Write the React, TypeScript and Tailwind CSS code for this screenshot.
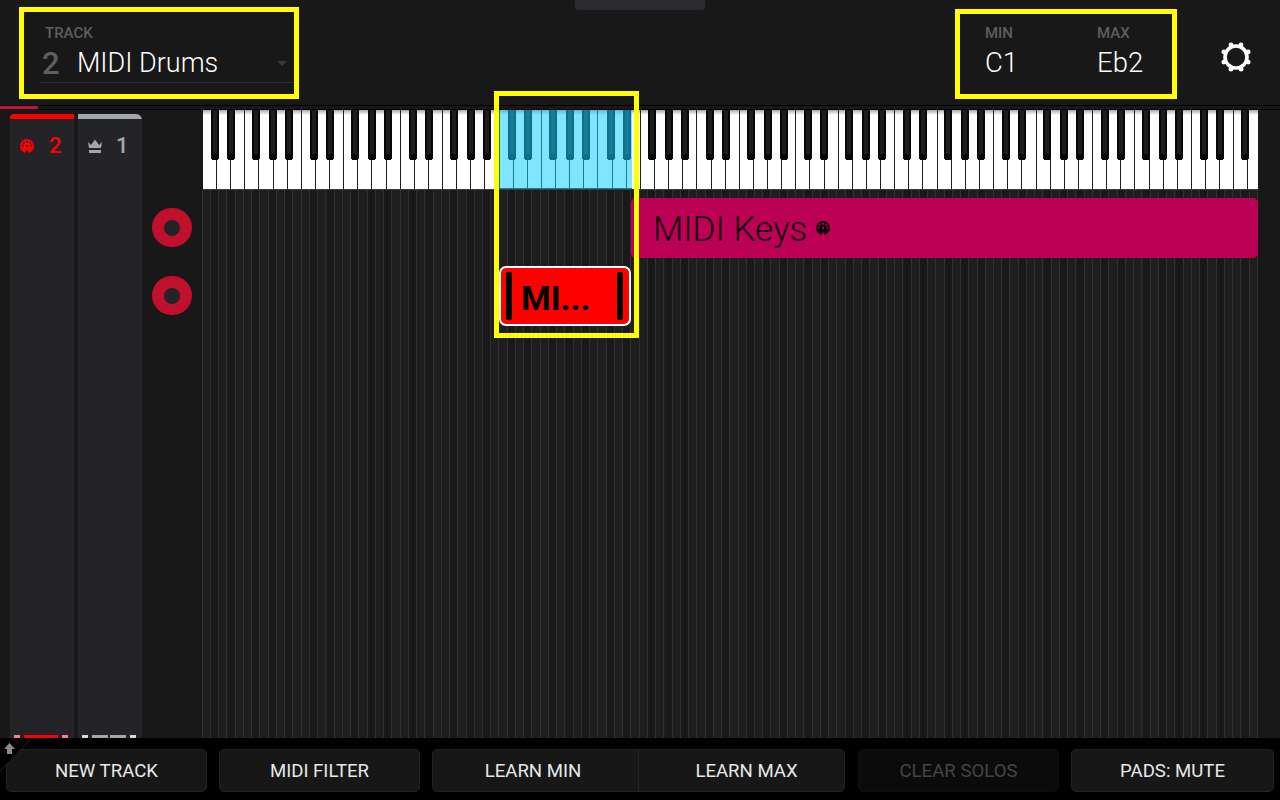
const SEMI = 1055 / 128;
const WHITE = (SEMI * 12) / 7;
const inBlue = (x: number) => x >= 496 && x < 632;

function Din({ color, hole, className }: { color: string; hole: string; className: string }) {
  return (
    <svg viewBox="0 0 14 14" className={className}>
      <circle cx="7" cy="7" r="7" fill={color} />
      {[[2.6, 6.6], [3.7, 3.7], [7, 2.5], [10.3, 3.7], [11.4, 6.6]].map(([x, y]) => (
        <rect key={x} x={x - 0.9} y={y - 0.9} width="1.8" height="1.8" fill={hole} />
      ))}
      <rect x="6.1" y="6" width="1.8" height="1.8" fill={hole} />
      <rect x="5.8" y="11.6" width="2.4" height="2.4" fill={hole} />
    </svg>
  );
}

function Crown() {
  return (
    <svg viewBox="0 0 14 14" className="w-[14px] h-[14px]">
      <path d="M0 3 L3 6 L7 0.5 L11 6 L14 3 L13 9 L1 9 Z" fill="#a2a8aa" />
      <rect x="1" y="11" width="12" height="3" fill="#a2a8aa" />
    </svg>
  );
}

function Gear() {
  const teeth = Array.from({ length: 8 }, (_, i) => ((i + 0.5) * Math.PI) / 4);
  return (
    <svg viewBox="0 0 32 32" className="w-8 h-8">
      <circle cx="16" cy="16" r="11" fill="none" stroke="#fff" strokeWidth="3.6" />
      {teeth.map((a) => (
        <circle key={a} cx={16 + 13.2 * Math.cos(a)} cy={16 + 13.2 * Math.sin(a)} r="2.4" fill="#fff" />
      ))}
    </svg>
  );
}

function Keyboard() {
  const lines = Array.from({ length: 74 }, (_, n) => 216 + WHITE * n);
  const blacks: number[] = [];
  for (let k = 0; k < 11; k++) {
    for (const o of [211, 227, 252, 269, 285]) {
      const x = o + SEMI * 12 * k;
      if (x + 8 <= 1258) blacks.push(Math.round(x));
    }
  }
  return (
    <svg width="1055" height="80" viewBox="203 110 1055 80" className="block" shapeRendering="crispEdges">
      <defs>
        <linearGradient id="topw" x1="0" y1="0" x2="0" y2="1">
          <stop offset="0" stopColor="#a9a9a9" />
          <stop offset="1" stopColor="#ffffff" />
        </linearGradient>
        <linearGradient id="topb" x1="0" y1="0" x2="0" y2="1">
          <stop offset="0" stopColor="#68b8cc" />
          <stop offset="1" stopColor="#80e5ff" />
        </linearGradient>
      </defs>
      <rect x="203" y="110" width="1055" height="80" fill="#fff" />
      <rect x="203" y="110" width="1055" height="5" fill="url(#topw)" />
      <rect x="496" y="110" width="136" height="80" fill="#80e5ff" />
      <rect x="496" y="110" width="136" height="5" fill="url(#topb)" />
      {lines.map((x) => (
        <rect key={x} x={Math.round(x)} y="110" width="1" height="80" fill={inBlue(x) ? "#127d98" : "#1e1e1e"} />
      ))}
      <rect x="496" y="188" width="136" height="1" fill="#127d98" />
      <rect x="203" y="189" width="1055" height="1" fill="#3c3c3c" />
      {blacks.map((x) => {
        const b = inBlue(x);
        return (
          <g key={x}>
            <rect x={x} y="110" width="8" height="49" fill={b ? "#0d6f88" : "#070707"} />
            <rect x={x + 1} y="159" width="6" height="1" fill={b ? "#0d6f88" : "#070707"} />
            <rect x={x + 2} y="110" width="4" height="44" fill={b ? "#147d97" : "#1d1d1d"} />
          </g>
        );
      })}
    </svg>
  );
}

function GridBack() {
  const blackPc = [1, 3, 6, 8, 10];
  return (
    <svg width="1056" height="548" viewBox="202 190 1056 548" className="absolute left-0 top-0" shapeRendering="crispEdges">
      <rect x="202" y="190" width="1056" height="548" fill="#1e1e1e" />
      {Array.from({ length: 128 }, (_, n) => {
        const x = Math.round(203 + SEMI * n);
        return blackPc.includes(n % 12) ? (
          <rect key={n} x={x} y="190" width="8" height="548" fill="#191919" />
        ) : null;
      })}
      {Array.from({ length: 128 }, (_, n) => (
        <rect key={n} x={Math.round(210 + SEMI * n)} y="190" width="1" height="548" fill="#303030" />
      ))}
      <rect x="202" y="190" width="1" height="548" fill="#343434" />
    </svg>
  );
}

function Ring() {
  return (
    <div className="w-10 h-[39px] rounded-full bg-[#c0102e] flex items-center justify-center">
      <div className="w-4 h-4 rounded-full bg-[#232328]" />
    </div>
  );
}

function TrackCol({ bar, rounded, children, foot }: { bar: string; rounded: string; children: React.ReactNode; foot: React.ReactNode }) {
  return (
    <div className={`w-16 h-full bg-[#232328] flex flex-col overflow-hidden ${rounded}`}>
      <div className={`h-[5px] ${bar}`} />
      <div className="h-[13px]" />
      <div className="flex items-center h-[28px]">{children}</div>
      <div className="flex-1" />
      {foot}
    </div>
  );
}

function Btn({ children, className }: { children: React.ReactNode; className: string }) {
  return (
    <div className={`h-[43px] flex items-center justify-center pt-[2px] rounded-[5px] text-[18.6px] border ${className}`}>{children}</div>
  );
}

export default function App() {
  return (
    <div className="relative w-[1280px] h-[800px] overflow-hidden bg-[#181818] flex flex-col font-['Roboto',sans-serif] text-white">
      {/* header */}
      <header className="relative h-[105px] flex">
        <div className="absolute left-[575px] top-0 w-[130px] h-[10px] bg-[#2b2b2f] rounded-b-[4px]" />
        <div className="w-[260px] ml-10 flex flex-col">
          <div className="pl-[5px] pt-[24px] h-[44px] text-[15px] leading-[18px] font-medium text-[#5e5e5e]">TRACK</div>
          <div className="h-[39px] flex items-center border-b border-[#2e2e2e]">
            <span className="text-[31px] w-[37px] pl-[2px] font-medium text-[#5e5e5e] leading-none">2</span>
            <span className="flex-1 text-[27px] font-light leading-none">MIDI Drums</span>
            <span className="mr-[13px] w-0 h-0 border-x-[5px] border-x-transparent border-t-[5px] border-t-[#3a3a3a]" />
          </div>
        </div>
        <div className="ml-[685px] w-[112px] flex flex-col">
          <div className="pt-[24px] h-[44px] text-[15px] leading-[18px] font-medium text-[#5e5e5e]">MIN</div>
          <div className="text-[27.5px] font-light leading-[38px]">C1</div>
        </div>
        <div className="w-[100px] flex flex-col">
          <div className="pt-[24px] h-[44px] text-[15px] leading-[18px] font-medium text-[#5e5e5e]">MAX</div>
          <div className="text-[27.5px] font-light leading-[38px]">Eb2</div>
        </div>
        <div className="ml-[23px] pt-[41px]">
          <Gear />
        </div>
      </header>

      {/* progress strip */}
      <div className="h-[5px] border-t border-b border-t-black border-b-black">
        <div className="w-[38px] h-full bg-[#c8103f]" />
      </div>

      {/* main */}
      <main className="flex-1 min-h-0 flex">
        <div className="h-full pl-[10px] pt-1 flex gap-1">
          <TrackCol
            bar="bg-[#ff0000]"
            rounded="rounded-tl-[4px]"
            foot={
              <div className="h-[3px] flex pl-1 gap-1">
                <div className="w-[6px] bg-[#ff8080]" />
                <div className="w-[34px] bg-[#ff0000]" />
                <div className="w-[6px] bg-[#ff8080]" />
              </div>
            }
          >
            <div className="ml-[10px] w-[29px]">
              <Din color="#ff0000" hole="#232328" className="w-[14px] h-[14px] block" />
            </div>
            <span className="text-[#ff0000] text-[22px] font-medium leading-none">2</span>
          </TrackCol>
          <TrackCol
            bar="bg-[#a2a8aa]"
            rounded="rounded-tr-[6px]"
            foot={
              <div className="h-[3px] flex pl-1">
                <div className="w-[6px] bg-[#d8d8d8]" />
                <div className="w-4 ml-1 bg-[#a2a8aa]" />
                <div className="w-4 ml-[2px] bg-[#a2a8aa]" />
                <div className="w-[6px] ml-1 bg-[#d8d8d8]" />
              </div>
            }
          >
            <div className="ml-[10px] w-[28px]">
              <Crown />
            </div>
            <span className="text-[#a2a8aa] text-[22px] font-medium leading-none">1</span>
          </TrackCol>
        </div>

        <div className="w-[60px] flex flex-col items-center pt-[98px] gap-[29px]">
          <Ring />
          <Ring />
        </div>

        <div className="w-[1056px] flex flex-col">
          <div className="ml-[1px] h-[80px]">
            <Keyboard />
          </div>
          <div className="relative flex-1 flex flex-col">
            <GridBack />
            <div className="relative ml-[429px] mt-[8px] h-[60px] bg-[#bb0055] rounded-[5px] flex items-center pl-[22px] pt-[3px] text-[#10000a]">
              <span className="text-[35px] font-light leading-none">MIDI Keys</span>
              <Din color="#10000a" hole="#bb0055" className="w-[14px] h-[14px] ml-[9px] mb-[3px] block" />
            </div>
            <div className="relative ml-[297px] mt-[8px] w-[132px] h-[60px] bg-[#ff0000] border-2 border-white rounded-[7px] flex items-center pl-[5px] text-black">
              <div className="w-[6px] h-[48px] rounded-[2px] bg-black" />
              <span className="flex-1 pl-[9px] pt-[3px] text-[34px] font-bold leading-none">MI...</span>
              <div className="w-[6px] h-[48px] rounded-[2px] bg-black mr-[6px]" />
            </div>
          </div>
        </div>
      </main>

      {/* footer */}
      <footer className="relative h-[62px] bg-black flex pl-[6px] pt-[11px] text-[#e8e8e8]">
        <Btn className="w-[201px] bg-[#171717] border-[#222]">NEW TRACK</Btn>
        <Btn className="w-[201px] ml-3 bg-[#171717] border-[#222]">MIDI FILTER</Btn>
        <div className="w-[413px] ml-3 h-[43px] flex rounded-[5px] bg-[#171717] border border-[#222] text-[18.6px]">
          <div className="w-[206px] flex items-center justify-center pt-[2px] pr-[5px] border-r border-[#262626]">LEARN MIN</div>
          <div className="flex-1 flex items-center justify-center pt-[2px] pl-[10px]">LEARN MAX</div>
        </div>
        <Btn className="w-[201px] ml-[13px] bg-[#0b0b0b] border-[#0f0f0f] text-[#454545]">CLEAR SOLOS</Btn>
        <Btn className="w-[203px] ml-3 bg-[#171717] border-[#222]">PADS: MUTE</Btn>
      </footer>

      {/* shift corner */}
      <svg width="34" height="36" viewBox="0 0 34 36" className="absolute left-0 top-[738px]">
        <path d="M0 0 H32 L0 33 Z" fill="#000" />
        <path d="M32 0 L0 33" stroke="#222" strokeWidth="1" fill="none" />
        <path d="M9.5 5 L15 11 H12 V16 H7 V11 H4 Z" fill="#8a8a8a" />
      </svg>

      {/* highlights */}
      <div className="absolute left-[19px] top-[7px] w-[280px] h-[92px] border-[5px] border-[#ffff00]" />
      <div className="absolute left-[955px] top-[9px] w-[222px] h-[90px] border-[5px] border-[#ffff00]" />
      <div className="absolute left-[494px] top-[91px] w-[145px] h-[247px] border-[5px] border-[#ffff00]" />
    </div>
  );
}
